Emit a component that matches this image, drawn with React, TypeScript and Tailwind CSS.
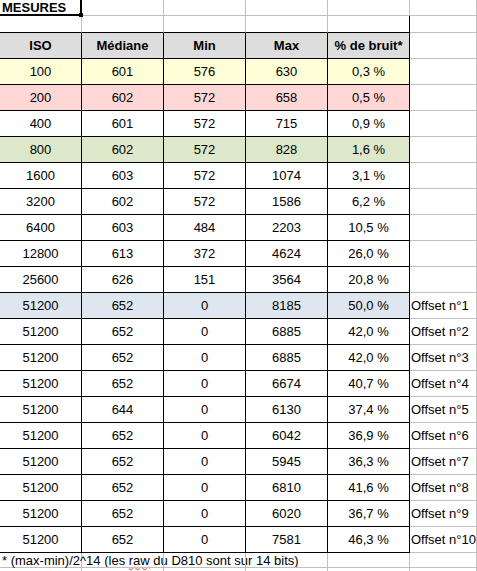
import React from "react";

type Row = {
	cells: string[];
	offset?: string;
	bg?: string;
};

const rows: Row[] = [
	{ cells: ["100", "601", "576", "630", "0,3 %"], bg: "bg-[#ffffd7]" },
	{ cells: ["200", "602", "572", "658", "0,5 %"], bg: "bg-[#ffd7d7]" },
	{ cells: ["400", "601", "572", "715", "0,9 %"] },
	{ cells: ["800", "602", "572", "828", "1,6 %"], bg: "bg-[#dde8cb]" },
	{ cells: ["1600", "603", "572", "1074", "3,1 %"] },
	{ cells: ["3200", "602", "572", "1586", "6,2 %"] },
	{ cells: ["6400", "603", "484", "2203", "10,5 %"] },
	{ cells: ["12800", "613", "372", "4624", "26,0 %"] },
	{ cells: ["25600", "626", "151", "3564", "20,8 %"] },
	{ cells: ["51200", "652", "0", "8185", "50,0 %"], offset: "Offset n°1", bg: "bg-[#dee6ef]" },
	{ cells: ["51200", "652", "0", "6885", "42,0 %"], offset: "Offset n°2" },
	{ cells: ["51200", "652", "0", "6885", "42,0 %"], offset: "Offset n°3" },
	{ cells: ["51200", "652", "0", "6674", "40,7 %"], offset: "Offset n°4" },
	{ cells: ["51200", "644", "0", "6130", "37,4 %"], offset: "Offset n°5" },
	{ cells: ["51200", "652", "0", "6042", "36,9 %"], offset: "Offset n°6" },
	{ cells: ["51200", "652", "0", "5945", "36,3 %"], offset: "Offset n°7" },
	{ cells: ["51200", "652", "0", "6810", "41,6 %"], offset: "Offset n°8" },
	{ cells: ["51200", "652", "0", "6020", "36,7 %"], offset: "Offset n°9" },
	{ cells: ["51200", "652", "0", "7581", "46,3 %"], offset: "Offset n°10" },
];

const headers = ["ISO", "Médiane", "Min", "Max", "% de bruit*"];

const grey = "border-[#c0c0c0]";

const App: React.FC = () => {
	return (
		<div
			className="w-[477px] h-[571px] overflow-hidden bg-white text-black text-[13px] leading-none"
			style={{ fontFamily: '"Liberation Sans", Arial, sans-serif' }}
		>
			{/* row 1 */}
			<div className="flex h-[16px]">
				<div className="relative w-[82px] shrink-0 border-r-2 border-b-2 border-black flex items-center pl-[2px] font-bold whitespace-nowrap">
					MESURES
					<div className="absolute right-[-3px] bottom-[-3px] w-[4px] h-[4px] bg-black" />
				</div>
				{[0, 1, 2, 3].map((i) => (
					<div key={i} className={`w-[82px] shrink-0 border-r border-b ${grey}`} />
				))}
				<div className={`w-[67px] shrink-0 border-r border-b ${grey}`} />
			</div>

			{/* row 2 */}
			<div className="flex h-[17px]">
				{[0, 1, 2, 3, 4].map((i) => (
					<div
						key={i}
						className={`w-[82px] shrink-0 border-b border-b-black border-r ${i === 4 ? "border-r-black" : "border-r-[#c0c0c0]"}`}
					/>
				))}
				<div className={`w-[67px] shrink-0 border-r border-b ${grey}`} />
			</div>

			{/* header */}
			<div className="flex h-[26px]">
				{headers.map((h) => (
					<div
						key={h}
						className="w-[82px] shrink-0 border-r border-b border-black bg-[#dddddd] flex items-center justify-center font-bold whitespace-nowrap"
					>
						{h}
					</div>
				))}
				<div className={`w-[67px] shrink-0 border-r border-b ${grey}`} />
			</div>

			{rows.map((r, idx) => (
				<div key={idx} className="flex h-[26px]">
					{r.cells.map((c, j) => (
						<div
							key={j}
							className={`w-[82px] shrink-0 border-r border-b border-black flex items-center justify-center ${r.bg ?? ""}`}
						>
							{c}
						</div>
					))}
					<div className={`w-[67px] shrink-0 border-r border-b ${grey} flex items-center pl-[1px] whitespace-nowrap`}>
						{r.offset}
					</div>
				</div>
			))}

			{/* footnote */}
			<div className="flex h-[15px]">
				<div className={`w-[82px] shrink-0 border-r border-b ${grey} flex items-center pl-[2px] whitespace-nowrap`}>
					<span>
						* (max-min)/2^14 (les{" "}
						<span className="underline decoration-wavy decoration-red-500 decoration-1 underline-offset-1">raw</span> du D810 sont sur 14 bits)
					</span>
				</div>
				{[0, 1, 2, 3].map((i) => (
					<div key={i} className={`w-[82px] shrink-0 border-r border-b ${grey}`} />
				))}
				<div className={`w-[67px] shrink-0 border-r border-b ${grey}`} />
			</div>

			<div className="flex h-[20px]">
				{[0, 1, 2, 3, 4].map((i) => (
					<div key={i} className={`w-[82px] shrink-0 border-r ${grey}`} />
				))}
				<div className={`w-[67px] shrink-0 border-r ${grey}`} />
			</div>
		</div>
	);
};

export default App;
